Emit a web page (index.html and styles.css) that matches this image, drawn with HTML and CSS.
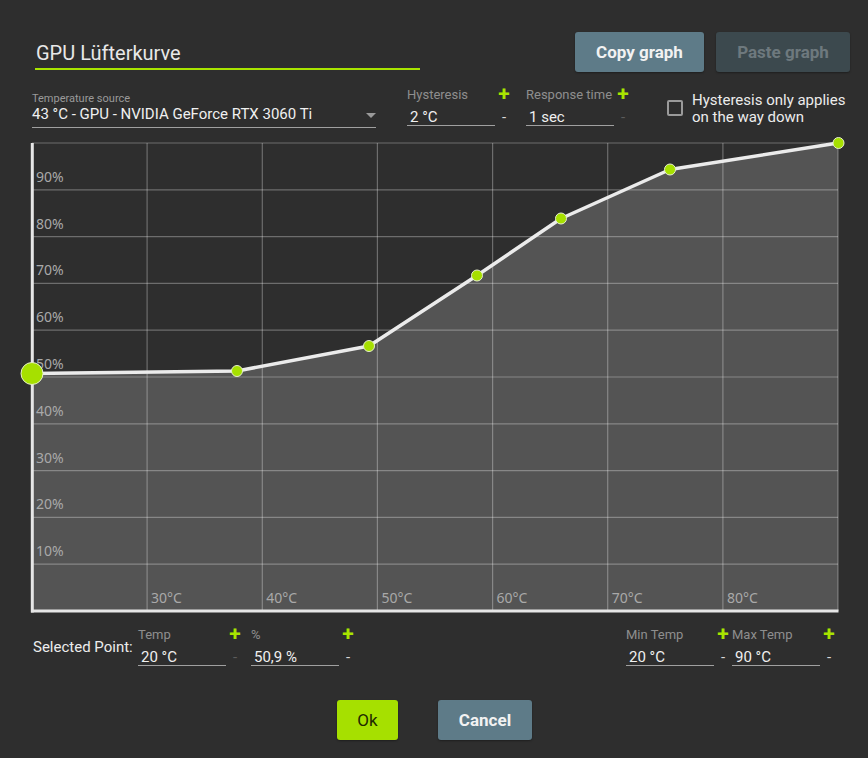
FILE: index.html
```html
<!DOCTYPE html>
<html lang="de">
<head>
<meta charset="utf-8">
<title>GPU Lüfterkurve</title>
<link rel="stylesheet" href="styles.css">
</head>
<body>
<div class="dialog">
  <div class="top">
    <div class="title">GPU Lüfterkurve</div>
    <div class="actions">
      <button class="btn btn-copy">Copy graph</button>
      <button class="btn btn-paste">Paste graph</button>
    </div>
  </div>

  <div class="settings">
    <div class="select-field">
      <div class="select-label">Temperature source</div>
      <div class="select-value"><span>43 °C - GPU - NVIDIA GeForce RTX 3060 Ti</span><span class="arrow"></span></div>
    </div>
    <div class="spin spin-hyst">
      <span class="spin-label">Hysteresis</span><span class="plus">+</span>
      <span class="spin-input">2 °C</span><span class="minus">-</span>
    </div>
    <div class="spin spin-resp">
      <span class="spin-label">Response time</span><span class="plus">+</span>
      <span class="spin-input">1 sec</span><span class="minus dim">-</span>
    </div>
    <label class="check">
      <span class="box"></span>
      <span class="check-text">Hysteresis only applies<br>on the way down</span>
    </label>
  </div>

  <div class="chart">
    <svg class="chart-svg" width="808" height="470" viewBox="31 142 808 470">
      <polygon class="fill" points="32,611 32,373.5 237,371 369,346 477,275.5 561,218.5 670,169.5 838,143 838,611"/>
      <g class="grid">
        <line x1="32" y1="143" x2="838" y2="143"/>
        <line x1="32" y1="189.8" x2="838" y2="189.8"/>
        <line x1="32" y1="236.6" x2="838" y2="236.6"/>
        <line x1="32" y1="283.4" x2="838" y2="283.4"/>
        <line x1="32" y1="330.2" x2="838" y2="330.2"/>
        <line x1="32" y1="377" x2="838" y2="377"/>
        <line x1="32" y1="423.8" x2="838" y2="423.8"/>
        <line x1="32" y1="470.6" x2="838" y2="470.6"/>
        <line x1="32" y1="517.4" x2="838" y2="517.4"/>
        <line x1="32" y1="564.2" x2="838" y2="564.2"/>
        <line x1="147.1" y1="143" x2="147.1" y2="611"/>
        <line x1="262.3" y1="143" x2="262.3" y2="611"/>
        <line x1="377.4" y1="143" x2="377.4" y2="611"/>
        <line x1="492.6" y1="143" x2="492.6" y2="611"/>
        <line x1="607.7" y1="143" x2="607.7" y2="611"/>
        <line x1="722.9" y1="143" x2="722.9" y2="611"/>
        <line x1="838" y1="143" x2="838" y2="611"/>
      </g>
      <g class="labels">
        <text x="36" y="182">90%</text>
        <text x="36" y="228.6">80%</text>
        <text x="36" y="275.4">70%</text>
        <text x="36" y="322.2">60%</text>
        <text x="36" y="369">50%</text>
        <text x="36" y="415.8">40%</text>
        <text x="36" y="462.6">30%</text>
        <text x="36" y="509.4">20%</text>
        <text x="36" y="556.2">10%</text>
        <text x="151.1" y="603">30°C</text>
        <text x="266.3" y="603">40°C</text>
        <text x="381.4" y="603">50°C</text>
        <text x="496.6" y="603">60°C</text>
        <text x="611.7" y="603">70°C</text>
        <text x="726.9" y="603">80°C</text>
      </g>
      <g class="axes">
        <line x1="32.3" y1="143" x2="32.3" y2="612.5"/>
        <line x1="31" y1="611" x2="838.5" y2="611"/>
      </g>
      <polyline class="curve" points="32,373.5 237,371 369,346 477,275.5 561,218.5 670,169.5 838,143"/>
      <g class="points">
        <circle cx="237" cy="371" r="5.5"/>
        <circle cx="369" cy="346" r="5.5"/>
        <circle cx="477" cy="275.5" r="5.5"/>
        <circle cx="561" cy="218.5" r="5.5"/>
        <circle cx="670" cy="169.5" r="5.5"/>
        <circle cx="838.5" cy="143" r="5.5"/>
        <circle cx="32" cy="373.5" r="11"/>
      </g>
    </svg>
  </div>

  <div class="point-row">
    <div class="selected-label">Selected Point:</div>
    <div class="spin spin-temp">
      <span class="spin-label">Temp</span><span class="plus">+</span>
      <span class="spin-input">20 °C</span><span class="minus dim">-</span>
    </div>
    <div class="spin spin-pct">
      <span class="spin-label">%</span><span class="plus">+</span>
      <span class="spin-input">50,9 %</span><span class="minus">-</span>
    </div>
    <div class="spacer"></div>
    <div class="spin">
      <span class="spin-label">Min Temp</span><span class="plus">+</span>
      <span class="spin-input">20 °C</span><span class="minus">-</span>
    </div>
    <div class="spin">
      <span class="spin-label">Max Temp</span><span class="plus">+</span>
      <span class="spin-input">90 °C</span><span class="minus">-</span>
    </div>
  </div>

  <div class="footer">
    <button class="btn btn-ok">Ok</button>
    <button class="btn btn-cancel">Cancel</button>
  </div>
</div>
</body>
</html>
```

FILE: styles.css
```css
html, body {
  margin: 0;
  padding: 0;
  background: #2e2e2e;
}

body {
  font-family: Roboto, "Liberation Sans", sans-serif;
  color: #ececec;
  width: 868px;
  height: 758px;
  overflow: hidden;
}

.dialog {
  display: flex;
  flex-direction: column;
}

/* top row */
.top {
  display: flex;
  justify-content: space-between;
  align-items: flex-start;
  padding: 32px 18px 0 35px;
  height: 40px;
}

.title {
  margin-top: 9px;
  width: 384px;
  padding-left: 1px;
  font-size: 20px;
  line-height: 24px;
  padding-bottom: 3px;
  border-bottom: 2px solid #a8e400;
  color: #e8e8e8;
}

.actions {
  display: flex;
  gap: 12px;
}

.btn {
  font-family: Roboto, "Liberation Sans", sans-serif;
  border: none;
  border-radius: 3px;
  height: 40px;
  font-size: 17px;
  font-weight: 700;
  padding: 0;
  box-shadow: 0 1px 2px rgba(0, 0, 0, 0.35);
}

.btn-copy {
  width: 129px;
  background: #5e7b88;
  color: #f2f2f2;
}

.btn-paste {
  width: 134px;
  background: #3c494e;
  color: #6e797e;
}

/* settings row */
.settings {
  display: flex;
  align-items: flex-start;
  margin-top: 14px;
  padding-left: 32px;
  height: 44px;
}

.select-field {
  margin-top: 6px;
  width: 344px;
  border-bottom: 1px solid #a0a0a0;
  padding-bottom: 4px;
}

.select-label {
  font-size: 11px;
  line-height: 13px;
  color: #9a9a9a;
}

.select-value {
  display: flex;
  justify-content: space-between;
  align-items: center;
  font-size: 15px;
  line-height: 18px;
  color: #f0f0f0;
}

.arrow {
  width: 0;
  height: 0;
  border-left: 5px solid transparent;
  border-right: 5px solid transparent;
  border-top: 5px solid #9a9a9a;
  margin-right: 0;
  margin-top: 2px;
}

.spin {
  display: grid;
  grid-template-columns: 88px 18px;
  grid-template-rows: 15px 18px;
  row-gap: 6px;
  margin-top: 1px;
}

.spin-label {
  font-size: 13px;
  line-height: 15px;
  color: #8e8e8e;
  white-space: nowrap;
}

.spin-input {
  grid-column: 1;
  grid-row: 2;
  font-size: 15px;
  line-height: 18px;
  padding-left: 3px;
  padding-bottom: 3px;
  border-bottom: 1px solid #a0a0a0;
  color: #f0f0f0;
}

.plus {
  grid-column: 2;
  grid-row: 1;
  text-align: center;
  color: #a8e400;
  font-weight: 700;
  font-size: 21px;
  line-height: 15px;
  margin-top: 0;
}

.minus {
  grid-column: 2;
  grid-row: 2;
  text-align: center;
  font-size: 15px;
  line-height: 18px;
  color: #d8d8d8;
}

.minus.dim {
  color: #5c5c5c;
}

.spin-hyst {
  margin-left: 31px;
}

.spin-resp {
  margin-left: 13px;
}

.check {
  display: flex;
  align-items: flex-start;
  margin-left: 35px;
  margin-top: 6px;
  gap: 9px;
}

.box {
  width: 12px;
  height: 12px;
  border: 2px solid #9a9a9a;
  border-radius: 2px;
  margin-top: 8px;
}

.check-text {
  font-size: 15px;
  line-height: 17px;
  color: #ececec;
}

/* chart */
.chart {
  margin-top: 12px;
  margin-left: 31px;
  width: 808px;
  height: 470px;
}

.chart-svg {
  display: block;
  overflow: visible;
}

.fill {
  fill: #545454;
}

.grid line {
  stroke: rgba(255, 255, 255, 0.3);
  stroke-width: 1.2;
}

.labels text {
  font-family: "Noto Sans", "Open Sans", sans-serif;
  font-size: 14px;
  fill: #a9a9a9;
}

.axes line {
  stroke: #e6e6e6;
  stroke-width: 3;
}

.curve {
  fill: none;
  stroke: #ebebeb;
  stroke-width: 3.5;
  stroke-linejoin: round;
  stroke-linecap: round;
}

.points circle {
  fill: #a6e000;
  stroke: #e6efcc;
  stroke-width: 1;
}

/* selected point row */
.point-row {
  display: flex;
  align-items: flex-start;
  margin-top: 14.5px;
  padding-left: 33px;
  padding-right: 30px;
  height: 43px;
}

.point-row .spin {
  margin-top: 0;
}

.selected-label {
  margin-top: 11.5px;
  font-size: 15px;
  line-height: 18px;
  color: #ececec;
  width: 105px;
}

.spin-pct {
  margin-left: 7px;
}

.spacer {
  flex: 1;
}

/* footer */
.footer {
  display: flex;
  justify-content: center;
  gap: 40px;
  margin-top: 30.5px;
  padding-left: 1px;
}

.btn-ok {
  width: 61px;
  background: #a6e000;
  color: #1f2a00;
  font-weight: 400;
}

.btn-cancel {
  width: 94px;
  background: #5e7b88;
  color: #f2f2f2;
}
```
